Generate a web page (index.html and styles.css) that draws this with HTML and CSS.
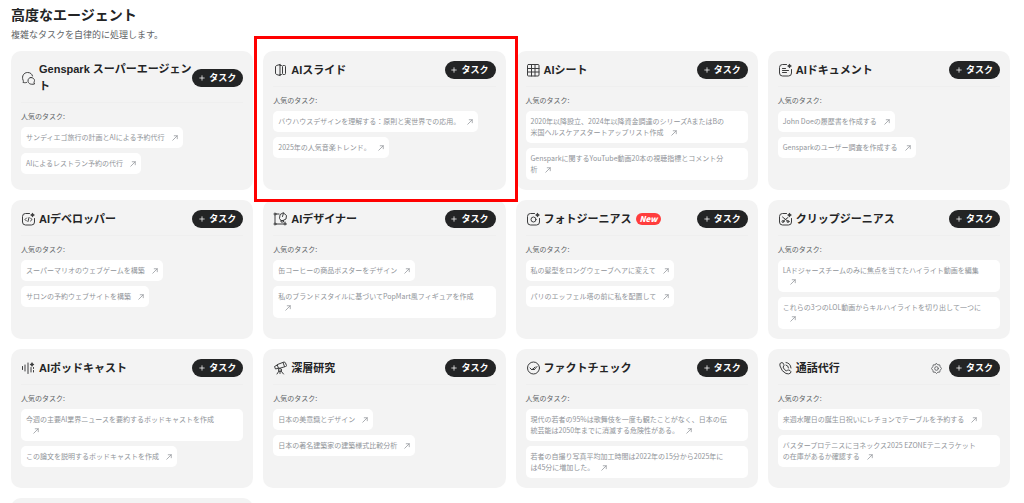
FILE: index.html
```html
<!DOCTYPE html>
<html lang="ja">
<head>
    <meta charset="UTF-8">
    <meta name="viewport" content="width=device-width, initial-scale=1.0">
    <title>高度なエージェント</title>
    <link rel="stylesheet" href="styles.css">
</head>
<body>
    <!-- Shared icons -->
    <svg class="sprite" aria-hidden="true">
        <symbol id="plus" viewBox="0 0 8 8"><path d="M4 1v6M1 4h6"/></symbol>
        <symbol id="arrow" viewBox="0 0 8 8"><path d="M1 7l6-6M3 1h4v4"/></symbol>
        <symbol id="sparkle" viewBox="0 0 8 8"><path d="M4 0q1 3 4 4q-3 1-4 4q-1-3-4-4q3-1 4-4z"/></symbol>
    </svg>

    <main class="page">
        <h1>高度なエージェント</h1>
        <p class="subtitle">複雑なタスクを自律的に処理します。</p>

        <div class="agents">
            <section class="card">
                <header class="card-header">
                    <svg class="icon" viewBox="0 0 28 28"><path d="M11 23c-3 1-5 0-7 0 1-2 1-3 0-5C1 10 6 3 13 3c6 0 9 3 10 7"/><path d="M20 13c4 0 7 3 7 6 0 2-1 3-1 4l1 3c-9 2-13-2-13-6 0-4 2-7 6-7z"/></svg>
                    <h2>Genspark スーパーエージェン<br>ト</h2>
                    <button class="new-task"><svg class="plus"><use href="#plus"/></svg>タスク</button>
                </header>
                <p class="label">人気のタスク:</p>
                <div class="tasks">
                    <button class="task">サンディエゴ旅行の計画とAIによる予約代行<svg class="arrow"><use href="#arrow"/></svg></button>
                    <button class="task">AIによるレストラン予約の代行<svg class="arrow"><use href="#arrow"/></svg></button>
                </div>
            </section>

            <section class="card highlighted">
                <header class="card-header">
                    <svg class="icon" viewBox="0 0 28 28"><path d="M14 3v22M14 3L7 5Q5 6 5 8v12q0 2 2 3l7 2M14 5h3q2 0 2 2v14q0 2-2 2h-3M21 5h2q2 0 2 2v14q0 2-2 2h-2"/></svg>
                    <h2>AIスライド</h2>
                    <button class="new-task"><svg class="plus"><use href="#plus"/></svg>タスク</button>
                </header>
                <p class="label">人気のタスク:</p>
                <div class="tasks">
                    <button class="task">バウハウスデザインを理解する：原則と実世界での応用。<svg class="arrow"><use href="#arrow"/></svg></button>
                    <button class="task">2025年の人気音楽トレンド。<svg class="arrow"><use href="#arrow"/></svg></button>
                </div>
            </section>

            <section class="card">
                <header class="card-header">
                    <svg class="icon" viewBox="0 0 28 28"><rect x="3" y="3" width="23" height="23" rx="2"/><path d="M11 3v23M18 3v23M3 11h23M3 18h23"/></svg>
                    <h2>AIシート</h2>
                    <button class="new-task"><svg class="plus"><use href="#plus"/></svg>タスク</button>
                </header>
                <p class="label">人気のタスク:</p>
                <div class="tasks">
                    <button class="task wide">2020年以降設立、2024年以降資金調達のシリーズAまたはBの<br>米国ヘルスケアスタートアップリスト作成<svg class="arrow"><use href="#arrow"/></svg></button>
                    <button class="task wide">Gensparkに関するYouTube動画20本の視聴指標とコメント分<br>析<svg class="arrow"><use href="#arrow"/></svg></button>
                </div>
            </section>

            <section class="card">
                <header class="card-header">
                    <svg class="icon" viewBox="0 0 28 28"><path d="M17 3H9Q3 3 3 9v11q0 6 6 6h12q6 0 6-6v-7M9 11h6M9 15h12M9 19h8"/><use class="solid" href="#sparkle" x="18" y="1" width="10" height="10"/></svg>
                    <h2>AIドキュメント</h2>
                    <button class="new-task"><svg class="plus"><use href="#plus"/></svg>タスク</button>
                </header>
                <p class="label">人気のタスク:</p>
                <div class="tasks">
                    <button class="task">John Doeの履歴書を作成する<svg class="arrow"><use href="#arrow"/></svg></button>
                    <button class="task">Gensparkのユーザー調査を作成する<svg class="arrow"><use href="#arrow"/></svg></button>
                </div>
            </section>

            <section class="card">
                <header class="card-header">
                    <svg class="icon" viewBox="0 0 28 28"><path d="M17 3H9Q3 3 3 9v11q0 6 6 6h12q6 0 6-6v-7M11 12l-3 3 3 3M19 12l3 3-3 3M16 11l-2 8"/><use class="solid" href="#sparkle" x="18" y="1" width="10" height="10"/></svg>
                    <h2>AIデベロッパー</h2>
                    <button class="new-task"><svg class="plus"><use href="#plus"/></svg>タスク</button>
                </header>
                <p class="label">人気のタスク:</p>
                <div class="tasks">
                    <button class="task">スーパーマリオのウェブゲームを構築<svg class="arrow"><use href="#arrow"/></svg></button>
                    <button class="task">サロンの予約ウェブサイトを構築<svg class="arrow"><use href="#arrow"/></svg></button>
                </div>
            </section>

            <section class="card">
                <header class="card-header">
                    <svg class="icon" viewBox="0 0 28 28"><path d="M4 6v16M6 4h6M6 24h16M24 20v2"/><circle cx="4" cy="4" r="2"/><circle cx="4" cy="24" r="2"/><circle cx="24" cy="24" r="2"/><path d="M21 2l6 5-1 7-6 3h-4l-3-4 1-7zM21 2l-2 7M16 17v3h5v-3"/></svg>
                    <h2>AIデザイナー</h2>
                    <button class="new-task"><svg class="plus"><use href="#plus"/></svg>タスク</button>
                </header>
                <p class="label">人気のタスク:</p>
                <div class="tasks">
                    <button class="task">缶コーヒーの商品ポスターをデザイン<svg class="arrow"><use href="#arrow"/></svg></button>
                    <button class="task wide">私のブランドスタイルに基づいてPopMart風フィギュアを作成<br><svg class="arrow"><use href="#arrow"/></svg></button>
                </div>
            </section>

            <section class="card">
                <header class="card-header">
                    <svg class="icon" viewBox="0 0 28 28"><path d="M17 3H9Q3 3 3 9v11q0 6 6 6h12q6 0 6-6v-7"/><circle cx="15" cy="15" r="5"/><use class="solid" href="#sparkle" x="18" y="1" width="10" height="10"/></svg>
                    <h2>フォトジーニアス</h2>
                    <span class="badge">New</span>
                    <button class="new-task"><svg class="plus"><use href="#plus"/></svg>タスク</button>
                </header>
                <p class="label">人気のタスク:</p>
                <div class="tasks">
                    <button class="task">私の髪型をロングウェーブヘアに変えて<svg class="arrow"><use href="#arrow"/></svg></button>
                    <button class="task">パリのエッフェル塔の前に私を配置して<svg class="arrow"><use href="#arrow"/></svg></button>
                </div>
            </section>

            <section class="card">
                <header class="card-header">
                    <svg class="icon" viewBox="0 0 28 28"><path d="M17 3H9Q3 3 3 9v11q0 6 6 6h12q6 0 6-6v-7M9 10l10 8M20 11l-9 7"/><circle cx="10" cy="19" r="2"/><circle cx="20" cy="19" r="2"/><use class="solid" href="#sparkle" x="18" y="1" width="10" height="10"/></svg>
                    <h2>クリップジーニアス</h2>
                    <button class="new-task"><svg class="plus"><use href="#plus"/></svg>タスク</button>
                </header>
                <p class="label">人気のタスク:</p>
                <div class="tasks">
                    <button class="task wide">LAドジャースチームのみに焦点を当てたハイライト動画を編集<br><svg class="arrow"><use href="#arrow"/></svg></button>
                    <button class="task wide">これらの3つのLOL動画からキルハイライトを切り出して一つに<br><svg class="arrow"><use href="#arrow"/></svg></button>
                </div>
            </section>

            <section class="card">
                <header class="card-header">
                    <svg class="icon" viewBox="0 0 28 28"><path d="M3 11v6M8 8v12M14 4v21M20 13v9M25 13v2M25 19v3"/><use class="solid" href="#sparkle" x="17" y="2" width="10" height="10"/></svg>
                    <h2>AIポッドキャスト</h2>
                    <button class="new-task"><svg class="plus"><use href="#plus"/></svg>タスク</button>
                </header>
                <p class="label">人気のタスク:</p>
                <div class="tasks">
                    <button class="task wide">今週の主要AI業界ニュースを要約するポッドキャストを作成<br><svg class="arrow"><use href="#arrow"/></svg></button>
                    <button class="task">この論文を説明するポッドキャストを作成<svg class="arrow"><use href="#arrow"/></svg></button>
                </div>
            </section>

            <section class="card">
                <header class="card-header">
                    <svg class="icon" viewBox="0 0 28 28"><path d="M9 7l13-5q2 0 3 2l2 5q0 2-2 2l-13 4zM9 8l-6 3 2 5 7-2M20 3l3 8"/><circle cx="14" cy="18" r="3"/><path d="M12 20l-4 6M16 20l5 6M14 21v4"/></svg>
                    <h2>深層研究</h2>
                    <button class="new-task"><svg class="plus"><use href="#plus"/></svg>タスク</button>
                </header>
                <p class="label">人気のタスク:</p>
                <div class="tasks">
                    <button class="task">日本の美意識とデザイン<svg class="arrow"><use href="#arrow"/></svg></button>
                    <button class="task">日本の著名建築家の建築様式比較分析<svg class="arrow"><use href="#arrow"/></svg></button>
                </div>
            </section>

            <section class="card">
                <header class="card-header">
                    <svg class="icon" viewBox="0 0 28 28"><circle cx="15" cy="14" r="12"/><path d="M8 14l4 4 6-6M14 16l2 2 6-7"/></svg>
                    <h2>ファクトチェック</h2>
                    <button class="new-task"><svg class="plus"><use href="#plus"/></svg>タスク</button>
                </header>
                <p class="label">人気のタスク:</p>
                <div class="tasks">
                    <button class="task wide">現代の若者の95%は歌舞伎を一度も観たことがなく、日本の伝<br>統芸能は2050年までに消滅する危険性がある。<svg class="arrow"><use href="#arrow"/></svg></button>
                    <button class="task wide">若者の自撮り写真平均加工時間は2022年の15分から2025年に<br>は45分に増加した。<svg class="arrow"><use href="#arrow"/></svg></button>
                </div>
            </section>

            <section class="card">
                <header class="card-header">
                    <svg class="icon" viewBox="0 0 28 28"><path d="M10 4Q8 2 5 4 3 5 4 10q3 11 12 15 6 2 9-1 2-3-1-5l-3-1q-2-1-4 2-5-2-7-8 3-2 2-4zM16 8q5 1 5 6M16 3q9 1 10 11"/></svg>
                    <h2>通話代行</h2>
                    <button class="settings" aria-label="設定"><svg viewBox="0 0 24 24"><path d="M12 1l3 3h4l1 4 3 4-3 4-1 4h-4l-3 3-3-3H5l-1-4-3-4 3-4 1-4h4z"/><circle cx="12" cy="12" r="4"/></svg></button>
                    <button class="new-task"><svg class="plus"><use href="#plus"/></svg>タスク</button>
                </header>
                <p class="label">人気のタスク:</p>
                <div class="tasks">
                    <button class="task">来週水曜日の誕生日祝いにレチョンでテーブルを予約する<svg class="arrow"><use href="#arrow"/></svg></button>
                    <button class="task wide">バスタープロテニスにヨネックス2025 EZONEテニスラケット<br>の在庫があるか確認する<svg class="arrow"><use href="#arrow"/></svg></button>
                </div>
            </section>

            <section class="card empty"></section>
        </div>
    </main>
</body>
</html>
```
FILE: styles.css
```css
* {
    box-sizing: border-box;
}
body {
    margin: 0;
    height: 100vh;
    overflow: hidden;
    background: #fff;
    color: #232425;
    font-family: "Noto Sans CJK JP", sans-serif;
}
h1, h2, p {
    margin: 0;
}
button {
    border: 0;
    font-family: inherit;
    cursor: pointer;
}
svg {
    fill: none;
    stroke: currentColor;
    stroke-linecap: round;
    stroke-linejoin: round;
}
.sprite {
    display: none;
}
.page {
    padding: 4px 14px 0 11px;
}
h1 {
    font-size: 14px;
    line-height: 20px;
}
.subtitle {
    margin: 4px 0 10px;
    color: #606366;
    font-size: 9px;
    line-height: 13px;
}

/* Cards */
.agents {
    display: grid;
    grid-template-columns: repeat(4, minmax(0, 1fr));
    gap: 10px;
}
.card {
    position: relative;
    padding: 10px;
    border-radius: 10px;
    background: #f3f3f3;
}
.empty {
    min-height: 139px;
}
.highlighted::after {
    content: "";
    position: absolute;
    inset: -15px -12px -12px -9px;
    z-index: 1;
    border: 3px solid #f00;
    pointer-events: none;
}
.card-header {
    display: flex;
    align-items: center;
    min-height: 26px;
    padding-bottom: 7px;
    border-bottom: 1px solid #efefef;
}
.icon {
    flex: none;
    width: 14px;
    height: 14px;
    margin-right: 4px;
    color: #3c3d3e;
    stroke-width: 2;
}
.solid {
    fill: currentColor;
    stroke: none;
}
h2 {
    flex: none;
    font-family: "Liberation Sans", "Noto Sans CJK JP", sans-serif;
    font-size: 11px;
    line-height: 17px;
    white-space: nowrap;
}
.badge {
    margin-left: 4px;
    padding: 0 4px;
    border-radius: 6px;
    background: #ff3d3d;
    color: #fff;
    font-size: 8px;
    font-style: italic;
    font-weight: 900;
    line-height: 12px;
}
.new-task {
    display: flex;
    flex: none;
    align-items: center;
    justify-content: center;
    gap: 4px;
    width: 51px;
    height: 18px;
    margin-left: auto;
    padding: 0;
    border-radius: 9px;
    background: #232425;
    color: #fff;
    font-size: 9px;
    font-weight: 700;
    line-height: 18px;
}
.plus {
    width: 6px;
    height: 6px;
}
.settings {
    display: flex;
    margin-left: auto;
    padding: 0;
    background: none;
    color: #606366;
}
.settings svg {
    width: 11px;
    height: 11px;
    stroke-width: 2;
}
.settings + .new-task {
    margin-left: 7px;
}

/* Popular tasks */
.label {
    margin: 8px 0 5px;
    color: #606366;
    font-size: 7px;
    line-height: 11px;
}
.tasks {
    display: flex;
    flex-direction: column;
    align-items: flex-start;
    gap: 5px;
}
.task {
    padding: 5px;
    border-radius: 5px;
    background: #fff;
    color: #909499;
    font-size: 7px;
    line-height: 11px;
    text-align: left;
}
.wide {
    width: 100%;
}
.arrow {
    width: 6px;
    height: 6px;
    margin-left: 7px;
    vertical-align: -1px;
}
```
